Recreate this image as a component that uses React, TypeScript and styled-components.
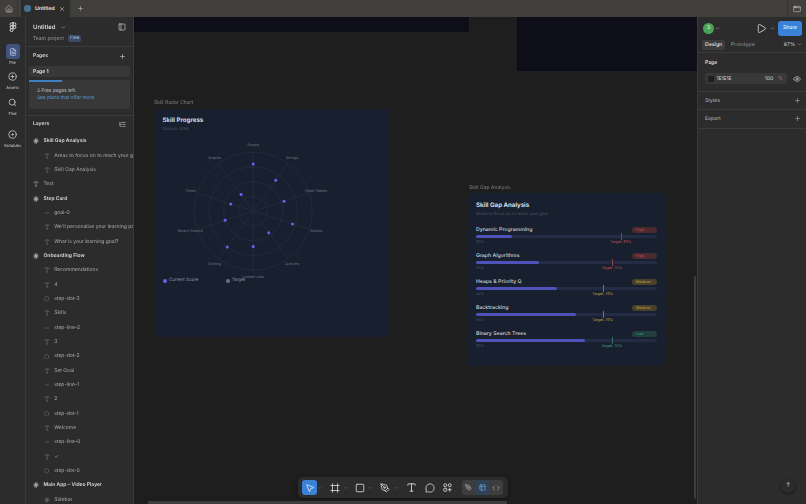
import React from 'react'
import styled, { createGlobalStyle } from 'styled-components'
import {
  Home, X, Plus, ChevronDown, PanelLeft, FileText, CirclePlus, Search, Disc, Eye, Play,
  MousePointer2, Frame, Square, PenTool, Type, MessageCircle, ListTree, Code, Minus,
  Circle, Hash, PanelsTopLeft, AppWindow,
} from 'lucide-react'

const GlobalStyle = createGlobalStyle`
  html, body {
    margin: 0;
    height: 100%;
    overflow: hidden;
    background: #1e1e1e;
  }
  * {
    box-sizing: border-box;
  }
  body {
    font-family: Inter, 'Liberation Sans', sans-serif;
    color: #e4e4e4;
    text-rendering: geometricPrecision;
    -webkit-font-smoothing: antialiased;
  }
`

const Page = styled.div`
  width: 806px;
  height: 504px;
  display: flex;
  flex-direction: column;
  filter: blur(0.4px);
`

/* tab strip */
const TabBar = styled.div`
  height: 17px;
  background: #403f3b;
  display: flex;
  align-items: stretch;
  color: #b8b8b4;
`
const HomeTab = styled.div`
  width: 18px;
  display: flex;
  align-items: center;
  justify-content: center;
  border-right: 1px solid #343431;
`
const ActiveTab = styled.div`
  width: 49px;
  margin-left: 3px;
  background: #2c2c2c;
  display: flex;
  align-items: center;
  gap: 4px;
  padding-left: 3px;
  padding-right: 5px;
  font-size: 5.2px;
  font-weight: 600;
  color: #e6e6e6;
`
const TabTitle = styled.span`
  flex: 1;
`
const FileDot = styled.div`
  width: 7px;
  height: 7px;
  border-radius: 3px;
  background: #43708f;
`
const NewTab = styled.div`
  width: 20px;
  display: flex;
  align-items: center;
  justify-content: center;
`
const TabSpacer = styled.div`
  flex: 1;
`
const WindowButton = styled.div`
  width: 19px;
  display: flex;
  align-items: center;
  justify-content: center;
  border-left: 1px solid #343431;
`

const Body = styled.div`
  flex: 1;
  min-height: 0;
  display: flex;
`

/* icon rail */
const Rail = styled.div`
  width: 26px;
  background: #2c2c2c;
  border-right: 1px solid #3a3a3a;
  display: flex;
  flex-direction: column;
  align-items: center;
  padding-top: 2px;
`
const RailLogo = styled.div`
  height: 16px;
  margin-bottom: 9px;
  display: flex;
  align-items: center;
  color: #d8d8d8;
`
const RailItem = styled.div`
  height: 25.3px;
  display: flex;
  flex-direction: column;
  align-items: center;
  color: #cfcfcf;
  font-size: 4px;
  line-height: 5px;
  gap: 1px;
`
const RailIcon = styled.div<{ $active?: boolean }>`
  width: 14px;
  height: 15px;
  border-radius: 3px;
  display: flex;
  align-items: center;
  justify-content: center;
  background: ${(p) => (p.$active ? '#41527c' : 'transparent')};
  color: ${(p) => (p.$active ? '#c5d4f5' : '#d4d4d4')};
`
const RailGap = styled.div`
  height: 7px;
`

/* layers panel */
const LeftPanel = styled.div`
  width: 108px;
  background: #2c2c2c;
  border-right: 1px solid #3a3a3a;
  display: flex;
  flex-direction: column;
  overflow: hidden;
`
const FileHeader = styled.div`
  height: 30px;
  flex: none;
  padding: 6px 7px 0 7px;
  border-bottom: 1px solid #3a3a3a;
`
const FileRow = styled.div`
  display: flex;
  align-items: center;
  font-size: 6px;
  font-weight: 500;
  color: #e6e6e6;
  gap: 6px;
`
const PushRight = styled.div`
  margin-left: auto;
  display: flex;
  color: #cfcfcf;
`
const TeamRow = styled.div`
  margin-top: 4px;
  display: flex;
  align-items: center;
  gap: 4px;
  font-size: 5px;
  color: #9a9a9a;
`
const FreeBadge = styled.span`
  background: #3c4a63;
  color: #9cc0ee;
  border-radius: 2px;
  padding: 0 2px;
  font-size: 4.6px;
  line-height: 7px;
`
const SectionHead = styled.div`
  height: 19px;
  flex: none;
  padding: 0 7px 1px;
  display: flex;
  align-items: center;
  font-size: 5px;
  font-weight: 600;
  color: #dcdcdc;
`
const PageRow = styled.div`
  margin: 0 0 0 3px;
  width: 101px;
  height: 11px;
  flex: none;
  padding-left: 4px;
  background: #383838;
  border-radius: 2px;
  display: flex;
  align-items: center;
  font-size: 5px;
  font-weight: 600;
  color: #e0e0e0;
`
const UpsellBox = styled.div`
  margin: 3px 0 6px 3px;
  width: 101px;
  height: 29px;
  flex: none;
  background: #383838;
  border-radius: 2px;
  position: relative;
  padding: 7.6px 0 0 8px;
  font-size: 4.8px;
  line-height: 7.4px;
  color: #c4c4c4;
`
const UpsellBar = styled.div`
  position: absolute;
  left: 0;
  top: 0;
  width: 33px;
  height: 1.5px;
  background: #3f7fc4;
`
const UpsellLink = styled.div`
  color: #5c9ed8;
`
const LayersHead = styled(SectionHead)`
  border-top: 1px solid #3a3a3a;
  height: 19.2px;
  padding-bottom: 1.5px;
`
const LayerRow = styled.div<{ $indent: number }>`
  height: 14.33px;
  flex: none;
  padding-left: ${(p) => (p.$indent === 2 ? 17.2 : 6.5)}px;
  display: flex;
  align-items: center;
  gap: 4px;
  white-space: nowrap;
  font-size: 5px;
  color: ${(p) => (p.$indent === 0 ? '#dcdcdc' : '#a8a8a8')};
  font-weight: ${(p) => (p.$indent === 0 ? 600 : 400)};
`
const LayerIcon = styled.div<{ $dim?: boolean }>`
  width: 7px;
  flex: none;
  display: flex;
  justify-content: center;
  color: ${(p) => (p.$dim ? '#7c7c7c' : '#bdbdbd')};
`

/* canvas */
const Canvas = styled.div`
  flex: 1;
  position: relative;
  background: #1e1e1e;
  overflow: hidden;
`
const OffFrame = styled.div<{ $x: number; $w: number; $h: number }>`
  position: absolute;
  top: 0;
  left: ${(p) => p.$x}px;
  width: ${(p) => p.$w}px;
  height: ${(p) => p.$h}px;
  background: #0e0e18;
`
const FrameLabel = styled.div<{ $x: number; $y: number }>`
  position: absolute;
  left: ${(p) => p.$x}px;
  top: ${(p) => p.$y}px;
  font-size: 5px;
  line-height: 6px;
  color: #808080;
`
const DarkCard = styled.div<{ $x: number; $y: number; $w: number; $h: number }>`
  position: absolute;
  left: ${(p) => p.$x}px;
  top: ${(p) => p.$y}px;
  width: ${(p) => p.$w}px;
  height: ${(p) => p.$h}px;
  background: #18202f;
  border-radius: 4px;
  display: flex;
  flex-direction: column;
  padding: 8.7px 8px 8px;
`
const CardTitle = styled.div`
  font-size: 6.2px;
  line-height: 8px;
  font-weight: 600;
  color: #e2e8f0;
`
const CardSub = styled.div`
  margin-top: 2px;
  font-size: 4.2px;
  line-height: 5px;
  color: #4f5868;
`
const RadarSvg = styled.svg`
  position: absolute;
  left: 0;
  top: 0;
`
const Legend = styled.div`
  position: absolute;
  left: 8px;
  top: 169.6px;
  display: flex;
  align-items: center;
  font-size: 4.4px;
  color: #8c94a3;
`
const LegendItem = styled.div`
  width: 63px;
  display: flex;
  align-items: center;
  gap: 2.5px;
`
const LegendDot = styled.div<{ $c: string }>`
  width: 4px;
  height: 4px;
  border-radius: 50%;
  background: ${(p) => p.$c};
`
const GapList = styled.div`
  margin-top: 9.8px;
  display: flex;
  flex-direction: column;
  gap: 6.2px;
`
const GapItem = styled.div`
  display: flex;
  flex-direction: column;
  height: 19.8px;
`
const GapHead = styled.div`
  height: 7px;
  display: flex;
  align-items: center;
  justify-content: space-between;
`
const GapName = styled.div`
  font-size: 5.2px;
  font-weight: 500;
  color: #d0d5de;
`
const Pill = styled.div<{ $c: string; $bg: string }>`
  width: 25px;
  height: 6.6px;
  border-radius: 3.3px;
  padding-left: 4px;
  font-size: 3.8px;
  line-height: 6.6px;
  color: ${(p) => p.$c};
  background: ${(p) => p.$bg};
`
const Track = styled.div`
  margin-top: 1.5px;
  height: 3.4px;
  background: #232b45;
  border-radius: 1.7px;
  position: relative;
`
const Fill = styled.div`
  height: 100%;
  background: #4f52b8;
  border-radius: 1.7px;
`
const Marker = styled.div<{ $c: string }>`
  position: absolute;
  top: -1.6px;
  width: 1.2px;
  height: 6.6px;
  background: ${(p) => p.$c};
`
const GapFoot = styled.div`
  position: relative;
  margin-top: 0.8px;
  height: 7px;
  font-size: 3.6px;
  line-height: 7px;
  color: #4f5868;
`
const TargetText = styled.span<{ $c: string }>`
  position: absolute;
  top: 0;
  transform: translateX(-50%);
  white-space: nowrap;
  color: ${(p) => p.$c};
`

/* bottom toolbar */
const Toolbar = styled.div`
  position: absolute;
  left: 164.3px;
  top: 460px;
  width: 210px;
  height: 21px;
  background: #2c2c2c;
  border-radius: 5px;
  display: flex;
  align-items: center;
  padding-left: 4px;
  box-shadow: 0 1px 4px rgba(0, 0, 0, 0.4);
  color: #d6d6d6;
`
const ToolActive = styled.div`
  width: 14.5px;
  height: 14.5px;
  border-radius: 3px;
  background: #3a82d8;
  color: #dbe9fb;
  display: flex;
  align-items: center;
  justify-content: center;
`
const ToolButton = styled.div<{ $w: number }>`
  width: ${(p) => p.$w}px;
  height: 15px;
  display: flex;
  align-items: center;
  justify-content: center;
`
const Caret = styled.div<{ $pull?: boolean }>`
  width: 6px;
  margin-left: ${(p) => (p.$pull ? -3.5 : 0)}px;
  display: flex;
  justify-content: center;
  color: #a8a8a8;
`
const ModeGroup = styled.div`
  margin-left: 3.8px;
  height: 15px;
  width: 41px;
  background: #3d3d3d;
  border-radius: 3px;
  display: flex;
  align-items: center;
`
const ModeButton = styled.div<{ $on?: boolean }>`
  flex: 1;
  height: 15px;
  border-radius: 3px;
  display: flex;
  align-items: center;
  justify-content: center;
  color: ${(p) => (p.$on ? '#7fb0e6' : '#b2b2b2')};
  background: ${(p) => (p.$on ? '#2e4258' : 'transparent')};
`
const VScroll = styled.div`
  position: absolute;
  left: 559.5px;
  top: 259px;
  width: 2.5px;
  height: 223px;
  border-radius: 1px;
  background: #3d3d3d;
`
const HScroll = styled.div`
  position: absolute;
  left: 14px;
  top: 484px;
  width: 359px;
  height: 2.5px;
  border-radius: 1px;
  background: #3d3d3d;
`

/* right panel */
const RightPanel = styled.div`
  width: 109px;
  position: relative;
  background: #2c2c2c;
  border-left: 1px solid #3a3a3a;
  display: flex;
  flex-direction: column;
`
const TopActions = styled.div`
  height: 22px;
  flex: none;
  padding: 1px 4px 0 5px;
  display: flex;
  align-items: center;
  color: #c8c8c8;
`
const Avatar = styled.div`
  width: 11px;
  height: 11px;
  margin-right: 1px;
  border-radius: 50%;
  background: #4aa35a;
  color: #e8f5ea;
  font-size: 5px;
  line-height: 11px;
  text-align: center;
`
const CaretGap = styled.div`
  margin-left: 3px;
  display: flex;
`
const ShareButton = styled.div`
  width: 24px;
  height: 14.5px;
  margin-left: 3px;
  border-radius: 3px;
  background: #3a82d8;
  color: #eaf3fd;
  font-size: 5px;
  font-weight: 500;
  line-height: 14.5px;
  text-align: center;
`
const TabsRow = styled.div`
  height: 14px;
  flex: none;
  padding: 0 4px 2px 4px;
  display: flex;
  align-items: center;
  border-bottom: 1px solid #3a3a3a;
  font-size: 5.2px;
  color: #9a9a9a;
`
const DesignTab = styled.div`
  background: #3c3c3c;
  color: #e0e0e0;
  font-weight: 500;
  border-radius: 2px;
  padding: 0 3px;
  line-height: 10px;
  margin-right: 5.5px;
`
const ZoomText = styled.div`
  margin-left: auto;
  display: flex;
  align-items: center;
  gap: 2px;
  color: #cfcfcf;
`
const PageSection = styled.div`
  height: 39px;
  flex: none;
  padding: 6.5px 0 0 7px;
  border-bottom: 1px solid #3a3a3a;
`
const PanelTitle = styled.div`
  font-size: 5px;
  font-weight: 600;
  color: #dedede;
  line-height: 6px;
`
const FillRow = styled.div`
  margin-top: 7.5px;
  display: flex;
  align-items: center;
  color: #cfcfcf;
`
const FillField = styled.div`
  width: 82px;
  height: 11px;
  margin-right: 6px;
  background: #383838;
  border-radius: 2px;
  display: flex;
  align-items: center;
  padding: 0 4px 0 2.5px;
  font-size: 5px;
  color: #d4d4d4;
`
const Swatch = styled.div`
  width: 6px;
  height: 6px;
  margin-right: 3px;
  background: #1e1e1e;
`
const Percent = styled.span`
  margin-left: auto;
`
const PercentSign = styled.span`
  margin-left: 5px;
  color: #8a8a8a;
`
const CollapsedSection = styled.div`
  height: 18.3px;
  flex: none;
  padding: 0 5px 0 7px;
  display: flex;
  align-items: center;
  justify-content: space-between;
  border-bottom: 1px solid #3a3a3a;
  font-size: 5px;
  font-weight: 500;
  color: #a4a4a4;
`
const HelpButton = styled.div`
  position: absolute;
  right: 11px;
  top: 462px;
  width: 14px;
  height: 14px;
  border-radius: 50%;
  background: #2c2c2c;
  box-shadow: 0 1px 3px rgba(0, 0, 0, 0.5);
  font-size: 6px;
  font-weight: 500;
  line-height: 14px;
  text-align: center;
  color: #c8c8c8;
`

const FigmaMark = () => (
  <svg width={10} height={10} viewBox="0 0 24 24" fill="none" stroke="currentColor" strokeWidth={2.4}>
    <path d="M5 5.5A3.5 3.5 0 0 1 8.5 2H12v7H8.5A3.5 3.5 0 0 1 5 5.5z" />
    <path d="M12 2h3.5a3.5 3.5 0 1 1 0 7H12V2z" />
    <path d="M12 12.5a3.5 3.5 0 1 1 7 0 3.5 3.5 0 1 1-7 0z" />
    <path d="M5 19.5A3.5 3.5 0 0 1 8.5 16H12v3.5a3.5 3.5 0 1 1-7 0z" />
    <path d="M5 12.5A3.5 3.5 0 0 1 8.5 9H12v7H8.5A3.5 3.5 0 0 1 5 12.5z" />
  </svg>
)

const ActionsIcon = () => (
  <svg width={9} height={9} viewBox="0 0 18 18" fill="none" stroke="currentColor" strokeWidth={1.8}>
    <circle cx={4.5} cy={4.5} r={3} />
    <rect x={10.5} y={1.5} width={6} height={6} rx={3} />
    <rect x={1.5} y={10.5} width={6} height={6} rx={1.5} />
    <path d="M13.5 10v7M10 13.5h7" />
  </svg>
)

type LayerKind = 'frame' | 'text' | 'line' | 'dot' | 'section'
const layers: { kind: LayerKind; name: string; indent: number }[] = [
  { kind: 'frame', name: 'Skill Gap Analysis', indent: 0 },
  { kind: 'text', name: 'Areas to focus on to reach your goal', indent: 2 },
  { kind: 'text', name: 'Skill Gap Analysis', indent: 2 },
  { kind: 'text', name: 'Text', indent: 1 },
  { kind: 'frame', name: 'Step Card', indent: 0 },
  { kind: 'line', name: 'goal-0', indent: 2 },
  { kind: 'text', name: "We'll personalise your learning path", indent: 2 },
  { kind: 'text', name: 'What is your learning goal?', indent: 2 },
  { kind: 'frame', name: 'Onboarding Flow', indent: 0 },
  { kind: 'text', name: 'Recommendations', indent: 2 },
  { kind: 'text', name: '4', indent: 2 },
  { kind: 'dot', name: 'step-dot-3', indent: 2 },
  { kind: 'text', name: 'Skills', indent: 2 },
  { kind: 'line', name: 'step-line-2', indent: 2 },
  { kind: 'text', name: '3', indent: 2 },
  { kind: 'dot', name: 'step-dot-2', indent: 2 },
  { kind: 'text', name: 'Set Goal', indent: 2 },
  { kind: 'line', name: 'step-line-1', indent: 2 },
  { kind: 'text', name: '2', indent: 2 },
  { kind: 'dot', name: 'step-dot-1', indent: 2 },
  { kind: 'text', name: 'Welcome', indent: 2 },
  { kind: 'line', name: 'step-line-0', indent: 2 },
  { kind: 'text', name: '✓', indent: 2 },
  { kind: 'dot', name: 'step-dot-0', indent: 2 },
  { kind: 'frame', name: 'Main App – Video Player', indent: 0 },
  { kind: 'section', name: 'Sidebar', indent: 2 },
]

const LayerGlyph = ({ kind, dim }: { kind: LayerKind; dim: boolean }) => (
  <LayerIcon $dim={dim}>
    {kind === 'text' && <Type size={6} />}
    {kind === 'frame' && <Hash size={6} strokeWidth={3} />}
    {kind === 'section' && <Hash size={6} strokeWidth={2} />}
    {kind === 'line' && <Minus size={6} />}
    {kind === 'dot' && <Circle size={5.5} />}
  </LayerIcon>
)

const RAD_CX = 98.2
const RAD_CY = 102.2
const RAD_R = 59
const skills: [string, number][] = [
  ['Arrays', 0.8],
  ['Strings', 0.65],
  ['Hash Tables', 0.55],
  ['Stacks', 0.7],
  ['Queues', 0.45],
  ['Linked Lists', 0.6],
  ['Sorting', 0.75],
  ['Binary Search', 0.5],
  ['Trees', 0.4],
  ['Graphs', 0.35],
]
const polar = (i: number, r: number) => {
  const a = (i * 36 * Math.PI) / 180
  return [RAD_CX + r * Math.sin(a), RAD_CY - r * Math.cos(a)]
}

const RadarChart = () => (
  <RadarSvg width={236} height={228}>
    {[1, 2, 3, 4].map((n) => (
      <circle key={n} cx={RAD_CX} cy={RAD_CY} r={(RAD_R * n) / 4} fill="none" stroke="#262d3c" strokeWidth={0.7} />
    ))}
    {skills.map(([name], i) => {
      const [x, y] = polar(i, RAD_R)
      return <line key={name} x1={RAD_CX} y1={RAD_CY} x2={x} y2={y} stroke="#262d3c" strokeWidth={0.7} />
    })}
    {skills.map(([name, v], i) => {
      const [x, y] = polar(i, RAD_R * v)
      return <circle key={name} cx={x} cy={y} r={1.5} fill="#6366f1" />
    })}
    {skills.map(([name], i) => {
      const [x, y] = polar(i, 66)
      return (
        <text key={name} x={x} y={y + 0.8} textAnchor="middle" fontSize={3.8} fill="#6f7786">
          {name}
        </text>
      )
    })}
  </RadarSvg>
)

const gaps = [
  { name: 'Dynamic Programming', now: 20, target: 80, level: 'High' },
  { name: 'Graph Algorithms', now: 35, target: 75, level: 'High' },
  { name: 'Heaps & Priority Q', now: 45, target: 70, level: 'Medium' },
  { name: 'Backtracking', now: 55, target: 70, level: 'Medium' },
  { name: 'Binary Search Trees', now: 60, target: 75, level: 'Low' },
]
const levelStyle: Record<string, { c: string; bg: string; mark: string }> = {
  High: { c: '#c9504f', bg: '#4a2b2f', mark: '#8c4448' },
  Medium: { c: '#c9a03f', bg: '#4a412c', mark: '#85733f' },
  Low: { c: '#3fa087', bg: '#213f3c', mark: '#3a6b66' },
}

export default function App() {
  return (
    <Page>
      <GlobalStyle />
      <TabBar>
        <HomeTab>
          <Home size={8} />
        </HomeTab>
        <ActiveTab>
          <FileDot />
          <TabTitle>Untitled</TabTitle>
          <X size={6} />
        </ActiveTab>
        <NewTab>
          <Plus size={7} />
        </NewTab>
        <TabSpacer />
        <WindowButton>
          <AppWindow size={8} />
        </WindowButton>
      </TabBar>
      <Body>
        <Rail>
          <RailLogo>
            <FigmaMark />
          </RailLogo>
          <RailItem>
            <RailIcon $active>
              <FileText size={8} />
            </RailIcon>
            File
          </RailItem>
          <RailItem>
            <RailIcon>
              <CirclePlus size={9} />
            </RailIcon>
            Assets
          </RailItem>
          <RailItem>
            <RailIcon>
              <Search size={9} />
            </RailIcon>
            Find
          </RailItem>
          <RailGap />
          <RailItem>
            <RailIcon>
              <Disc size={9} />
            </RailIcon>
            Variables
          </RailItem>
        </Rail>
        <LeftPanel>
          <FileHeader>
            <FileRow>
              Untitled
              <ChevronDown size={5} />
              <PushRight>
                <PanelLeft size={8} />
              </PushRight>
            </FileRow>
            <TeamRow>
              Team project <FreeBadge>Free</FreeBadge>
            </TeamRow>
          </FileHeader>
          <SectionHead>
            Pages
            <PushRight>
              <Plus size={7} />
            </PushRight>
          </SectionHead>
          <PageRow>Page 1</PageRow>
          <UpsellBox>
            <UpsellBar />
            2 Free pages left.
            <UpsellLink>See plans that offer more</UpsellLink>
          </UpsellBox>
          <LayersHead>
            Layers
            <PushRight>
              <ListTree size={7} />
            </PushRight>
          </LayersHead>
          {layers.map((l, i) => (
            <LayerRow key={i} $indent={l.indent}>
              <LayerGlyph kind={l.kind} dim={l.indent === 2} />
              {l.name}
            </LayerRow>
          ))}
        </LeftPanel>
        <Canvas>
          <OffFrame $x={0} $w={335} $h={15} />
          <OffFrame $x={383} $w={180} $h={53.7} />
          <FrameLabel $x={20} $y={82.5}>
            Skill Radar Chart
          </FrameLabel>
          <DarkCard $x={20.5} $y={91.5} $w={235.5} $h={228}>
            <RadarChart />
            <CardTitle>Skill Progress</CardTitle>
            <CardSub>Domain: DSA</CardSub>
            <Legend>
              <LegendItem>
                <LegendDot $c="#6366f1" />
                Current Score
              </LegendItem>
              <LegendItem>
                <LegendDot $c="#6b7280" />
                Target
              </LegendItem>
            </Legend>
          </DarkCard>
          <FrameLabel $x={335} $y={167.5}>
            Skill Gap Analysis
          </FrameLabel>
          <DarkCard $x={334} $y={176} $w={197} $h={173}>
            <CardTitle>Skill Gap Analysis</CardTitle>
            <CardSub>Areas to focus on to reach your goal</CardSub>
            <GapList>
              {gaps.map((g) => {
                const s = levelStyle[g.level]
                return (
                  <GapItem key={g.name}>
                    <GapHead>
                      <GapName>{g.name}</GapName>
                      <Pill $c={s.c} $bg={s.bg}>
                        {g.level}
                      </Pill>
                    </GapHead>
                    <Track>
                      <Fill style={{ width: `${g.now}%` }} />
                      <Marker $c={s.mark} style={{ left: `${g.target}%` }} />
                    </Track>
                    <GapFoot>
                      {g.now}%
                      <TargetText $c={s.c} style={{ left: `${g.target}%` }}>
                        Target: {g.target}%
                      </TargetText>
                    </GapFoot>
                  </GapItem>
                )
              })}
            </GapList>
          </DarkCard>
          <Toolbar>
            <ToolActive>
              <MousePointer2 size={10} />
            </ToolActive>
            <Caret>
              <ChevronDown size={4} />
            </Caret>
            <ToolButton $w={24}>
              <Frame size={10} />
            </ToolButton>
            <Caret $pull>
              <ChevronDown size={4} />
            </Caret>
            <ToolButton $w={21}>
              <Square size={10} />
            </ToolButton>
            <Caret $pull>
              <ChevronDown size={4} />
            </Caret>
            <ToolButton $w={25}>
              <PenTool size={10} />
            </ToolButton>
            <Caret $pull>
              <ChevronDown size={4} />
            </Caret>
            <ToolButton $w={22.5}>
              <Type size={11} />
            </ToolButton>
            <ToolButton $w={14}>
              <MessageCircle size={10} />
            </ToolButton>
            <ToolButton $w={21.5}>
              <ActionsIcon />
            </ToolButton>
            <ModeGroup>
              <ModeButton>
                <PenTool size={7} />
              </ModeButton>
              <ModeButton $on>
                <PanelsTopLeft size={7} />
              </ModeButton>
              <ModeButton>
                <Code size={8} />
              </ModeButton>
            </ModeGroup>
          </Toolbar>
          <VScroll />
          <HScroll />
        </Canvas>
        <RightPanel>
          <TopActions>
            <Avatar>S</Avatar>
            <ChevronDown size={5} />
            <PushRight>
              <Play size={11} />
            </PushRight>
            <CaretGap>
              <ChevronDown size={5} />
            </CaretGap>
            <ShareButton>Share</ShareButton>
          </TopActions>
          <TabsRow>
            <DesignTab>Design</DesignTab>
            Prototype
            <ZoomText>
              87%
              <ChevronDown size={5} />
            </ZoomText>
          </TabsRow>
          <PageSection>
            <PanelTitle>Page</PanelTitle>
            <FillRow>
              <FillField>
                <Swatch />
                1E1E1E
                <Percent>100</Percent>
                <PercentSign>%</PercentSign>
              </FillField>
              <Eye size={8} />
            </FillRow>
          </PageSection>
          <CollapsedSection>
            Styles
            <Plus size={7} />
          </CollapsedSection>
          <CollapsedSection>
            Export
            <Plus size={7} />
          </CollapsedSection>
          <HelpButton>?</HelpButton>
        </RightPanel>
      </Body>
    </Page>
  )
}
